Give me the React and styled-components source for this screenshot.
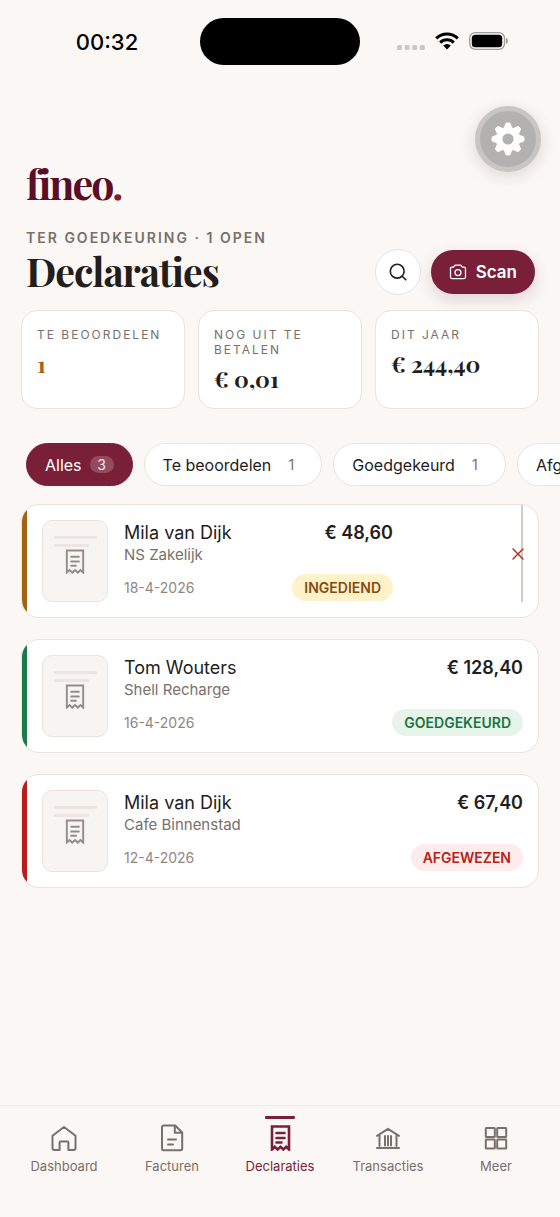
import React from "react";
import styled, { createGlobalStyle, css, ThemeProvider } from "styled-components";

const theme = {
  bg: "#fbf7f4",
  card: "#ffffff",
  line: "#ece2de",
  brand: "#7a1f38",
  brandDark: "#5a0e27",
  ink: "#231d1b",
  muted: "#78706a",
  faint: "#8e8782",
  sans: 'Inter, "Liberation Sans", sans-serif',
  serif: '"Playfair Display", "Liberation Serif", serif',
};

const GlobalStyle = createGlobalStyle`
  *, *::before, *::after { box-sizing: border-box; }
  body {
    margin: 0;
    background: ${theme.bg};
    color: ${theme.ink};
    font-family: ${theme.sans};
    -webkit-font-smoothing: antialiased;
  }
  button { font: inherit; color: inherit; cursor: pointer; padding: 0; }
  h1, p, ul, dl, dd { margin: 0; padding: 0; }
  ul { list-style: none; }
  svg { display: block; flex: none; }
`;

const Screen = styled.div`
  position: relative;
  min-height: 100vh;
  display: flex;
  flex-direction: column;
  overflow: hidden;
`;

const StatusBar = styled.div`
  display: grid;
  grid-template-columns: 1fr 160px 1fr;
  align-items: center;
  padding-top: 18px;
  color: #000;
`;

const Clock = styled.time`
  padding-left: 14px;
  text-align: center;
  font-size: 22px;
  line-height: 28px;
  font-weight: 500;
`;

const Island = styled.div`
  height: 47px;
  border-radius: 24px;
  background: #000;
`;

const StatusIcons = styled.div`
  display: flex;
  align-items: center;
  justify-content: center;
  gap: 10px;
  padding: 0 14px 2px 0;
`;

const SettingsButton = styled.button`
  position: absolute;
  top: 106px;
  right: 19px;
  width: 66px;
  height: 66px;
  display: grid;
  place-items: center;
  border: 5px solid #c8c5c3;
  border-radius: 50%;
  background: #b3b1af;
  box-shadow: 0 4px 16px rgba(60, 30, 30, 0.14);
`;

const Header = styled.header`
  padding: 94px 25px 0 26px;
`;

const Logo = styled.div`
  font-family: ${(p) => p.theme.serif};
  font-size: 41px;
  line-height: 48px;
  font-weight: 700;
  letter-spacing: -2px;
  color: ${(p) => p.theme.brandDark};

  span { color: ${(p) => p.theme.brand}; }
`;

const Eyebrow = styled.p`
  margin-top: 22px;
  font-size: 14px;
  line-height: 18px;
  font-weight: 600;
  letter-spacing: 2px;
  text-transform: uppercase;
  color: ${(p) => p.theme.muted};
`;

const TitleRow = styled.div`
  display: flex;
  align-items: center;
  gap: 10px;
  height: 49px;
`;

const Title = styled.h1`
  flex: 1;
  padding-bottom: 2px;
  font-family: ${(p) => p.theme.serif};
  font-size: 39px;
  line-height: 46px;
  font-weight: 700;
  letter-spacing: -1px;
`;

const SearchButton = styled.button`
  width: 46px;
  height: 46px;
  display: grid;
  place-items: center;
  border: 1px solid ${(p) => p.theme.line};
  border-radius: 50%;
  background: ${(p) => p.theme.card};
`;

const ScanButton = styled.button`
  height: 44px;
  display: flex;
  align-items: center;
  gap: 9px;
  padding: 0 18px;
  border: 0;
  border-radius: 22px;
  background: ${(p) => p.theme.brand};
  color: #fff;
  font-size: 17px;
  font-weight: 600;
  box-shadow: 0 6px 16px rgba(90, 30, 45, 0.16);
`;

const Stats = styled.dl`
  display: grid;
  grid-template-columns: repeat(3, 1fr);
  gap: 13px;
  padding: 14px 21px 0;
`;

const Stat = styled.div`
  min-height: 99px;
  padding: 16px 15px 15px;
  border: 1px solid ${(p) => p.theme.line};
  border-radius: 16px;
  background: ${(p) => p.theme.card};
`;

const StatLabel = styled.dt`
  font-size: 12px;
  line-height: 15px;
  letter-spacing: 2px;
  text-transform: uppercase;
  color: ${(p) => p.theme.muted};
`;

const StatValue = styled.dd`
  margin-top: 8px;
  font-family: ${(p) => p.theme.serif};
  font-size: 23px;
  line-height: 28px;
  font-weight: 700;
  color: ${(p) => (p.$pending ? "#a3640f" : p.theme.ink)};
`;

const Chips = styled.div`
  display: flex;
  gap: 11px;
  margin-top: 34px;
  padding-left: 26px;
  overflow-x: auto;
  scrollbar-width: none;
`;

const ChipCount = styled.span`
  min-width: 24px;
  border-radius: 9px;
  font-size: 14px;
  line-height: 17px;
  text-align: center;
  color: ${(p) => p.theme.muted};
`;

const Chip = styled.button`
  flex: none;
  height: 43px;
  display: flex;
  align-items: center;
  gap: 8px;
  padding: 0 18px;
  border: 1px solid ${(p) => p.theme.line};
  border-radius: 22px;
  background: ${(p) => p.theme.card};
  font-size: 16px;

  ${(p) =>
    p.$active &&
    css`
      border-color: ${p.theme.brand};
      background: ${p.theme.brand};
      color: #fff;
      ${ChipCount} {
        background: rgba(255, 255, 255, 0.2);
        color: #f3e6ea;
      }
    `}
`;

const ClaimList = styled.ul`
  display: flex;
  flex-direction: column;
  gap: 21px;
  padding: 18px 21px 24px;
`;

const ClaimCard = styled.li`
  display: flex;
  border: 1px solid ${(p) => p.theme.line};
  border-radius: 18px;
  background: ${(p) => p.theme.card};
  overflow: hidden;

  &::before {
    content: "";
    width: 5px;
    background: ${(p) => p.$accent};
  }
`;

const ClaimBody = styled.div`
  flex: 1;
  min-width: 0;
  display: flex;
  padding: 15px;
`;

const Thumb = styled.div`
  width: 66px;
  height: 82px;
  display: flex;
  flex-direction: column;
  align-items: center;
  padding-top: 15px;
  border: 1px solid ${(p) => p.theme.line};
  border-radius: 10px;
  background: #f8f4f2;
  color: #938d89;
`;

const ThumbLine = styled.span`
  align-self: flex-start;
  width: ${(p) => (p.$short ? "35px" : "43px")};
  height: 3px;
  margin: 0 0 ${(p) => (p.$short ? "2px" : "5px")} 11px;
  border-radius: 1px;
  background: #eee5e0;
`;

const ClaimText = styled.div`
  flex: 1;
  min-width: 0;
  padding: 1px 0 0 16px;
`;

const Name = styled.p`
  font-size: 18px;
  line-height: 24px;
`;

const Merchant = styled.p`
  font-size: 15px;
  line-height: 20px;
  color: ${(p) => p.theme.muted};
`;

const ClaimDate = styled.time`
  display: block;
  margin-top: 14px;
  font-size: 14px;
  line-height: 18px;
  color: ${(p) => p.theme.faint};
`;

const ClaimSide = styled.div`
  display: flex;
  flex-direction: column;
  align-items: flex-end;
  justify-content: space-between;
  padding: 1px 0;
`;

const Amount = styled.p`
  font-size: 18px;
  line-height: 24px;
  font-weight: 600;
`;

const Badge = styled.span`
  padding: 0 12px;
  border-radius: 14px;
  font-size: 14px;
  line-height: 27px;
  font-weight: 600;
  color: ${(p) => p.$color};
  background: ${(p) => p.$tint};
`;

const Actions = styled.div`
  position: relative;
  width: 130px;
  margin-top: -15px;
  border-right: 2px solid #d3cdca;
`;

const RejectButton = styled.button`
  position: absolute;
  right: -9px;
  bottom: 36px;
  width: 24px;
  height: 24px;
  display: grid;
  place-items: center;
  border: 0;
  background: none;
  color: #b42318;
`;

const TabBar = styled.nav`
  display: grid;
  grid-template-columns: repeat(5, 1fr);
  height: 112px;
  margin-top: auto;
  padding: 10px 10px 0;
  border-top: 1px solid #f1eae6;
`;

const Tab = styled.a`
  display: flex;
  flex-direction: column;
  align-items: center;
  font-size: 13px;
  line-height: 16px;
  text-decoration: none;
  color: ${(p) => (p.$active ? p.theme.brand : p.theme.muted)};

  &::before {
    content: "";
    width: 30px;
    height: 3px;
    margin-bottom: 5px;
    border-radius: 1px;
    background: ${(p) => (p.$active ? p.theme.brand : "transparent")};
  }
`;

const TabIcon = styled.span`
  width: 28px;
  height: 28px;
  display: grid;
  place-items: center;
  margin-bottom: 6px;
`;

const stroke = {
  fill: "none",
  stroke: "currentColor",
  strokeWidth: 2,
  strokeLinecap: "round",
  strokeLinejoin: "round",
  "aria-hidden": true,
};

function ReceiptIcon({ width, height, strokeWidth = 2 }) {
  return (
    <svg {...stroke} width={width} height={height} viewBox="0 0 20 26" strokeWidth={strokeWidth}>
      <path d="M1.500 24.500V1.500h17v23l-2.800-2.700-2.800 2.700-2.900-2.700-2.900 2.700-2.800-2.700z" strokeLinejoin="miter" />
      <path d="M6 8h8M6 13h8M6 17.500h5" />
    </svg>
  );
}

function HomeIcon() {
  return (
    <svg {...stroke} width="28" height="28" viewBox="0 0 28 28">
      <path d="M9.600 26H4.500a2 2 0 0 1-2-2V11.800L14 3l11.500 8.800V24a2 2 0 0 1-2 2h-5.100V18.400a1 1 0 0 0-1-1h-6.800a1 1 0 0 0-1 1z" />
    </svg>
  );
}

function InvoiceIcon() {
  return (
    <svg {...stroke} width="28" height="28" viewBox="0 0 28 28">
      <path d="M5.700 1.500h11.500l7 7v16a1.700 1.700 0 0 1-1.700 1.700H5.700A1.700 1.700 0 0 1 4 24.500V3.200a1.700 1.700 0 0 1 1.700-1.700z" />
      <path d="M16.800 1.800v7h7M10 15.500h8M10 20.500h5" />
    </svg>
  );
}

function BankIcon() {
  return (
    <svg {...stroke} width="28" height="28" viewBox="0 0 28 28">
      <path d="M3 11.800L14 4.800l11 7M5.500 11.500V22M22.500 11.500V22M11 12v9.500M14 12v9.500M17 12v9.500M3 24h22" />
    </svg>
  );
}

function GridIcon() {
  return (
    <svg {...stroke} width="28" height="28" viewBox="0 0 28 28">
      <rect x="3.800" y="4" width="9" height="9" rx="0.500" />
      <rect x="15.200" y="4" width="9" height="9" rx="0.500" />
      <rect x="3.800" y="15.400" width="9" height="9" rx="0.500" />
      <rect x="15.200" y="15.400" width="9" height="9" rx="0.500" />
    </svg>
  );
}

function GearIcon() {
  return (
    <svg width="34" height="34" viewBox="-17 -17 34 34" fill="#fff" aria-hidden="true">
      {[0, 45, 90, 135].map((a) => (
        <path
          key={a}
          transform={`rotate(${a})`}
          d="M-4.200 -11L-2.900 -14.800Q-2.500 -16.500 -1.100 -16.500H1.100Q2.500 -16.500 2.900 -14.800L4.200 -11V11L2.900 14.800Q2.500 16.500 1.100 16.500H-1.100Q-2.500 16.500 -2.900 14.800L-4.200 11Z"
        />
      ))}
      <circle r="12.200" />
      <circle r="5.600" fill="#b3b1af" />
    </svg>
  );
}

function SearchIcon() {
  return (
    <svg {...stroke} width="18" height="18" viewBox="0 0 18 18" strokeWidth="1.600">
      <circle cx="8.200" cy="8.200" r="6.900" />
      <path d="M13.200 13.200L16.800 16.800" />
    </svg>
  );
}

function CameraIcon() {
  return (
    <svg {...stroke} width="18" height="16" viewBox="0 0 18 16" strokeWidth="1.300">
      <path d="M2.500 3.200h2l1.600-2h5.600l1.600 2h2A1.500 1.500 0 0 1 16.500 4.700v8.400a1.500 1.500 0 0 1-1.500 1.500H3a1.500 1.500 0 0 1-1.500-1.500V4.200a1 1 0 0 1 1-1z" />
      <circle cx="9" cy="8.600" r="3" />
    </svg>
  );
}

function SignalDots() {
  return (
    <svg width="28" height="18" viewBox="0 0 28 18" fill="#cbc7c5" aria-hidden="true">
      {[0, 7.600, 15.200, 22.800].map((x) => (
        <rect key={x} x={x} y="13" width="5" height="5" rx="1.500" />
      ))}
    </svg>
  );
}

function WifiIcon() {
  return (
    <svg width="24" height="18" viewBox="0 0 24 18" aria-hidden="true">
      <g fill="none" stroke="#000" strokeWidth="3">
        <path d="M1.200 6.400a15.300 15.300 0 0 1 21.600 0" />
        <path d="M5.200 10.600a9.600 9.600 0 0 1 13.600 0" />
      </g>
      <path d="M8.200 13.600a5.400 5.400 0 0 1 7.600 0L12 17.600z" />
    </svg>
  );
}

function BatteryIcon() {
  return (
    <svg width="40" height="18" viewBox="0 0 40 18" aria-hidden="true">
      <rect x="0.700" y="0.700" width="34.800" height="16.600" rx="5.500" fill="none" stroke="#a09c9a" strokeWidth="1.300" />
      <rect x="2.800" y="2.800" width="30.400" height="12.400" rx="3.500" />
      <path d="M37 6v6q2-.700 2-3t-2-3z" fill="#a09c9a" />
    </svg>
  );
}

function CrossIcon() {
  return (
    <svg {...stroke} width="12" height="12" viewBox="0 0 12 12" strokeWidth="1.400">
      <path d="M1 1l10 10M11 1L1 11" />
    </svg>
  );
}

const stats = [
  { label: "Te beoordelen", value: "1", pending: true },
  { label: "Nog uit te betalen", value: "€ 0,01" },
  { label: "Dit jaar", value: "€ 244,40" },
];

const filters = [
  { label: "Alles", count: 3 },
  { label: "Te beoordelen", count: 1 },
  { label: "Goedgekeurd", count: 1 },
  { label: "Afgewezen", count: 1 },
];

const statuses = {
  submitted: { label: "INGEDIEND", accent: "#a3640f", color: "#854d0e", tint: "#fdf2c9" },
  approved: { label: "GOEDGEKEURD", accent: "#1a7a48", color: "#1a7444", tint: "#e6f4ea" },
  rejected: { label: "AFGEWEZEN", accent: "#b91c1c", color: "#b42318", tint: "#feebeb" },
};

const claims = [
  { name: "Mila van Dijk", merchant: "NS Zakelijk", date: "18-4-2026", amount: "€ 48,60", status: "submitted" },
  { name: "Tom Wouters", merchant: "Shell Recharge", date: "16-4-2026", amount: "€ 128,40", status: "approved" },
  { name: "Mila van Dijk", merchant: "Cafe Binnenstad", date: "12-4-2026", amount: "€ 67,40", status: "rejected" },
];

const tabs = [
  { label: "Dashboard", icon: <HomeIcon /> },
  { label: "Facturen", icon: <InvoiceIcon /> },
  { label: "Declaraties", icon: <ReceiptIcon width={21} height={26} strokeWidth={2.600} />, active: true },
  { label: "Transacties", icon: <BankIcon /> },
  { label: "Meer", icon: <GridIcon /> },
];

function Claim({ claim }) {
  const status = statuses[claim.status];
  return (
    <ClaimCard $accent={status.accent}>
      <ClaimBody>
        <Thumb>
          <ThumbLine />
          <ThumbLine $short />
          <ReceiptIcon width={20} height={25} />
        </Thumb>
        <ClaimText>
          <Name>{claim.name}</Name>
          <Merchant>{claim.merchant}</Merchant>
          <ClaimDate>{claim.date}</ClaimDate>
        </ClaimText>
        <ClaimSide>
          <Amount>{claim.amount}</Amount>
          <Badge $color={status.color} $tint={status.tint}>{status.label}</Badge>
        </ClaimSide>
        {claim.status === "submitted" && (
          <Actions>
            <RejectButton aria-label="Afwijzen"><CrossIcon /></RejectButton>
          </Actions>
        )}
      </ClaimBody>
    </ClaimCard>
  );
}

export default function App() {
  return (
    <ThemeProvider theme={theme}>
      <GlobalStyle />
      <Screen>
        <StatusBar>
          <Clock>00:32</Clock>
          <Island />
          <StatusIcons>
            <SignalDots />
            <WifiIcon />
            <BatteryIcon />
          </StatusIcons>
        </StatusBar>
        <SettingsButton aria-label="Instellingen"><GearIcon /></SettingsButton>
        <Header>
          <Logo>fineo<span>.</span></Logo>
          <Eyebrow>Ter goedkeuring · 1 open</Eyebrow>
          <TitleRow>
            <Title>Declaraties</Title>
            <SearchButton aria-label="Zoeken"><SearchIcon /></SearchButton>
            <ScanButton><CameraIcon />Scan</ScanButton>
          </TitleRow>
        </Header>
        <Stats>
          {stats.map((s) => (
            <Stat key={s.label}>
              <StatLabel>{s.label}</StatLabel>
              <StatValue $pending={s.pending}>{s.value}</StatValue>
            </Stat>
          ))}
        </Stats>
        <Chips>
          {filters.map((f, i) => (
            <Chip key={f.label} $active={i === 0} aria-pressed={i === 0}>
              {f.label}
              <ChipCount>{f.count}</ChipCount>
            </Chip>
          ))}
        </Chips>
        <ClaimList>
          {claims.map((c) => <Claim key={c.date} claim={c} />)}
        </ClaimList>
        <TabBar>
          {tabs.map((t) => (
            <Tab key={t.label} href={`#${t.label.toLowerCase()}`} $active={t.active}>
              <TabIcon>{t.icon}</TabIcon>
              {t.label}
            </Tab>
          ))}
        </TabBar>
      </Screen>
    </ThemeProvider>
  );
}
